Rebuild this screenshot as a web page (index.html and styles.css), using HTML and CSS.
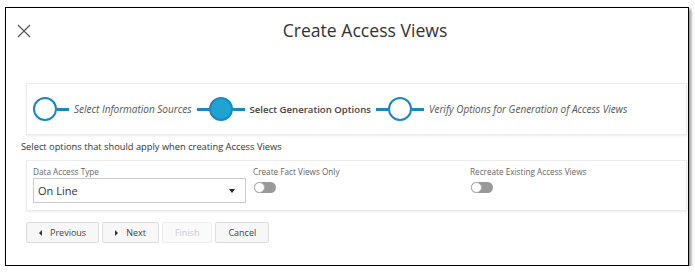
FILE: index.html
```html
<!DOCTYPE html>
<html lang="en">
<head>
    <meta charset="UTF-8">
    <title>Create Access Views</title>
    <link rel="stylesheet" href="styles.css">
</head>
<body>
    <div class="dialog">
        <div class="header">
            <div class="close">
                <svg width="14" height="14" viewBox="0 0 14 14">
                    <path d="M1 1 L13 13 M13 1 L1 13" stroke="#555" stroke-width="1.2" fill="none"/>
                </svg>
            </div>
            <div class="title">Create Access Views</div>
        </div>

        <div class="card steps">
            <span class="circle"></span>
            <span class="line"></span>
            <span class="step-text">Select Information Sources</span>
            <span class="line"></span>
            <span class="circle current"></span>
            <span class="line"></span>
            <span class="step-text active">Select Generation Options</span>
            <span class="line"></span>
            <span class="circle"></span>
            <span class="line"></span>
            <span class="step-text">Verify Options for Generation of Access Views</span>
        </div>

        <div class="intro">Select options that should apply when creating Access Views</div>

        <div class="card options">
            <div class="field">
                <label>Data Access Type</label>
                <div class="select">
                    <span>On Line</span>
                    <span class="caret"></span>
                </div>
            </div>
            <div class="field">
                <label>Create Fact Views Only</label>
                <span class="toggle"><span class="knob"></span></span>
            </div>
            <div class="field">
                <label>Recreate Existing Access Views</label>
                <span class="toggle"><span class="knob"></span></span>
            </div>
        </div>

        <div class="buttons">
            <button class="btn"><span class="arrow left"></span>Previous</button>
            <button class="btn"><span class="arrow right"></span>Next</button>
            <button class="btn disabled">Finish</button>
            <button class="btn">Cancel</button>
        </div>
    </div>
</body>
</html>
```

FILE: styles.css
```css
* {
    box-sizing: border-box;
}
body {
    margin: 0;
    background: #fff;
    font-family: "Open Sans", Arial, sans-serif;
    color: #444;
}
.dialog {
    margin: 7px 0 0 5px;
    width: 684px;
    height: 259px;
    border: 1px solid #000;
    box-shadow: 2px 2px 3px rgba(0, 0, 0, 0.45);
    background: #fff;
}
.header {
    display: flex;
    align-items: center;
    height: 44px;
}
.close {
    width: 36px;
    display: flex;
    justify-content: center;
    padding-top: 1px;
}
.title {
    flex: 1;
    text-align: center;
    font-size: 17.6px;
    color: #333;
}
.card {
    margin: 0 1px 0 20px;
    border: 1px solid #ececec;
    box-shadow: 0 1px 2px rgba(0, 0, 0, 0.08);
    background: #fff;
}
.steps {
    margin-top: 31px;
    height: 52px;
    display: flex;
    align-items: center;
    padding-left: 6px;
}
.circle {
    width: 24px;
    height: 24px;
    border: 2px solid #1a86c2;
    border-radius: 50%;
    background: #fff;
    flex: none;
}
.circle.current {
    background: #1fa3d3;
    border-color: #1b88c0;
}
.line {
    width: 12px;
    height: 3px;
    background: #1a86c2;
    flex: none;
}
.step-text {
    font-size: 10px;
    font-style: italic;
    color: #555;
    margin: 0 5px;
    white-space: nowrap;
}
.step-text.active {
    font-style: normal;
    font-weight: 600;
    font-size: 9.6px;
    color: #444;
}
.intro {
    font-size: 9.3px;
    color: #333;
    margin: 5px 0 0 15px;
    height: 20px;
}
.options {
    height: 51px;
    display: grid;
    grid-template-columns: 213px 210px 1fr;
    column-gap: 7px;
    padding: 5px 6px 0;
}
.field label {
    display: block;
    font-size: 8.2px;
    color: #666;
    height: 12px;
}
.select {
    height: 25px;
    border: 1px solid #ccc;
    display: flex;
    align-items: center;
    justify-content: space-between;
    padding: 0 10px 0 4px;
    font-size: 11px;
    color: #333;
}
.caret {
    width: 0;
    height: 0;
    border-left: 3px solid transparent;
    border-right: 3px solid transparent;
    border-top: 4px solid #222;
}
.toggle {
    display: block;
    position: relative;
    width: 22px;
    height: 11px;
    margin: 4px 0 0 1px;
    border-radius: 6px;
    background: #999;
}
.knob {
    position: absolute;
    left: 0;
    top: 0;
    width: 11px;
    height: 11px;
    border: 1px solid #aaa;
    border-radius: 50%;
    background: #fff;
}
.buttons {
    display: flex;
    gap: 3px;
    margin: 11px 0 0 20px;
}
.btn {
    height: 21px;
    padding: 0 12px;
    border: 1px solid #ddd;
    border-radius: 2px;
    background: #f7f7f7;
    font-family: "Open Sans", Arial, sans-serif;
    font-size: 9px;
    color: #444;
    display: flex;
    align-items: center;
}
.btn.disabled {
    color: #ccc;
    background: #fafafa;
    border-color: #eee;
}
.arrow {
    width: 0;
    height: 0;
    border-top: 3px solid transparent;
    border-bottom: 3px solid transparent;
    margin-right: 8px;
}
.arrow.left {
    border-right: 3px solid #333;
}
.arrow.right {
    border-left: 3px solid #333;
}
```
